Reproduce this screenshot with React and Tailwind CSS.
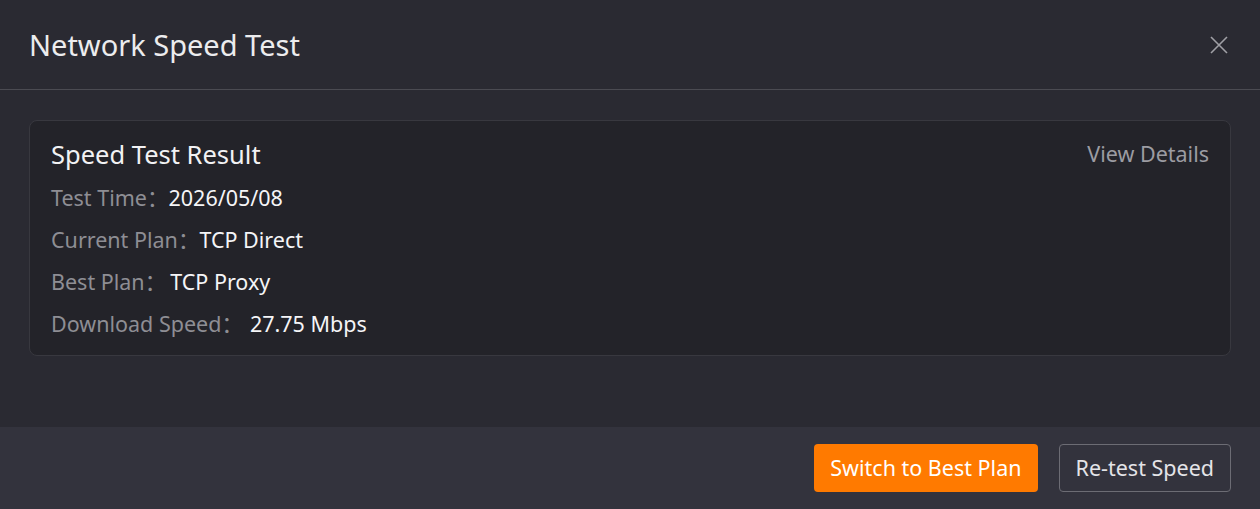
export default function App() {
  const rows = [
    { label: "Test Time", value: "2026/05/08", gap: "ml-0" },
    { label: "Current Plan", value: "TCP Direct", gap: "ml-0" },
    { label: "Best Plan", value: "TCP Proxy", gap: "ml-1" },
    { label: "Download Speed", value: "27.75 Mbps", gap: "ml-[7px]" },
  ];

  return (
    <div
      className="w-[1260px] h-[509px] flex flex-col bg-[#2a2a32] text-white overflow-hidden"
      style={{ fontFamily: '"Noto Sans", "Noto Sans CJK SC", sans-serif' }}
    >
      <div className="h-[90px] flex items-center justify-between pl-[29px] pr-[31px] border-b border-[#4b4b52]">
        <h1 className="text-[29px] text-[#ececee] leading-none">Network Speed Test</h1>
        <svg width="20" height="20" viewBox="0 0 20 20" className="text-[#a0a0a6]">
          <path d="M2 2 L18 18 M18 2 L2 18" stroke="currentColor" strokeWidth="1.6" />
        </svg>
      </div>

      <div className="flex-1 px-[29px] pt-[30px]">
        <div className="h-[236px] rounded-lg border border-[#38383f] bg-[#232329] px-[21px] pt-[16px] flex justify-between">
          <div>
            <p className="text-[25.5px] leading-[34px] text-[#f2f2f4]">Speed Test Result</p>
            <div className="mt-[6px]">
              {rows.map((r) => (
                <p key={r.label} className="text-[21.5px] leading-[42px] flex">
                  <span className="text-[#8e8e94]">{r.label}：</span>
                  <span className={`text-[#f5f5f7] ${r.gap}`}>{r.value}</span>
                </p>
              ))}
            </div>
          </div>
          <p className="text-[21.5px] leading-[34px] text-[#9c9ca2]">View Details</p>
        </div>
      </div>

      <div className="h-[82px] bg-[#33333d] flex items-center justify-end gap-[21px] pr-[29px]">
        <button className="h-[48px] px-[16px] rounded bg-[#ff7a00] text-[21.5px] text-white">
          Switch to Best Plan
        </button>
        <button className="h-[48px] px-[16px] rounded border border-[#6c6c74] text-[21.5px] text-[#e4e4e8]">
          Re-test Speed
        </button>
      </div>
    </div>
  );
}
